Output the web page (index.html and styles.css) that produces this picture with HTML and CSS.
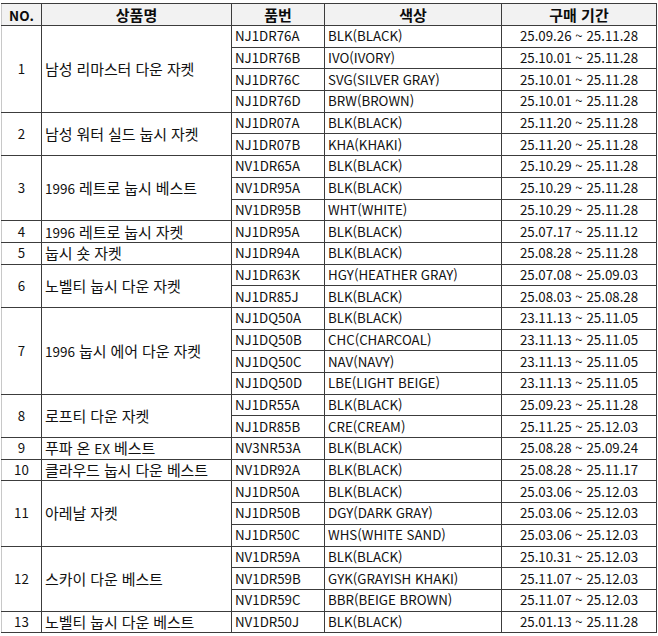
FILE: index.html
```html
<!DOCTYPE html>
<html lang="ko">
<head>
<meta charset="utf-8">
<link rel="stylesheet" href="styles.css">
</head>
<body>
<div class="sheet">
<table class="grid">
<colgroup>
<col class="c-no"><col class="c-name"><col class="c-code"><col class="c-color"><col class="c-period">
</colgroup>
<thead>
<tr class="head"><th class="lat-h">NO.</th><th>상품명</th><th>품번</th><th>색상</th><th>구매 기간</th></tr>
</thead>
<tbody>
<tr><td class="no" rowspan="4">1</td><td class="name" rowspan="4">남성 리마스터 다운 자켓</td><td class="code">NJ1DR76A</td><td class="color">BLK(BLACK)</td><td class="period">25.09.26 ~ 25.11.28</td></tr>
<tr><td class="code">NJ1DR76B</td><td class="color">IVO(IVORY)</td><td class="period">25.10.01 ~ 25.11.28</td></tr>
<tr><td class="code">NJ1DR76C</td><td class="color">SVG(SILVER GRAY)</td><td class="period">25.10.01 ~ 25.11.28</td></tr>
<tr><td class="code">NJ1DR76D</td><td class="color">BRW(BROWN)</td><td class="period">25.10.01 ~ 25.11.28</td></tr>

<tr><td class="no" rowspan="2">2</td><td class="name" rowspan="2">남성 워터 실드 눕시 자켓</td><td class="code">NJ1DR07A</td><td class="color">BLK(BLACK)</td><td class="period">25.11.20 ~ 25.11.28</td></tr>
<tr><td class="code">NJ1DR07B</td><td class="color">KHA(KHAKI)</td><td class="period">25.11.20 ~ 25.11.28</td></tr>

<tr><td class="no" rowspan="3">3</td><td class="name" rowspan="3"><span class="lat">1996</span> 레트로 눕시 베스트</td><td class="code">NV1DR65A</td><td class="color">BLK(BLACK)</td><td class="period">25.10.29 ~ 25.11.28</td></tr>
<tr><td class="code">NV1DR95A</td><td class="color">BLK(BLACK)</td><td class="period">25.10.29 ~ 25.11.28</td></tr>
<tr><td class="code">NV1DR95B</td><td class="color">WHT(WHITE)</td><td class="period">25.10.29 ~ 25.11.28</td></tr>

<tr><td class="no">4</td><td class="name"><span class="lat">1996</span> 레트로 눕시 자켓</td><td class="code">NJ1DR95A</td><td class="color">BLK(BLACK)</td><td class="period">25.07.17 ~ 25.11.12</td></tr>

<tr><td class="no">5</td><td class="name">눕시 숏 자켓</td><td class="code">NJ1DR94A</td><td class="color">BLK(BLACK)</td><td class="period">25.08.28 ~ 25.11.28</td></tr>

<tr><td class="no" rowspan="2">6</td><td class="name" rowspan="2">노벨티 눕시 다운 자켓</td><td class="code">NJ1DR63K</td><td class="color">HGY(HEATHER GRAY)</td><td class="period">25.07.08 ~ 25.09.03</td></tr>
<tr><td class="code">NJ1DR85J</td><td class="color">BLK(BLACK)</td><td class="period">25.08.03 ~ 25.08.28</td></tr>

<tr><td class="no" rowspan="4">7</td><td class="name" rowspan="4"><span class="lat">1996</span> 눕시 에어 다운 자켓</td><td class="code">NJ1DQ50A</td><td class="color">BLK(BLACK)</td><td class="period">23.11.13 ~ 25.11.05</td></tr>
<tr><td class="code">NJ1DQ50B</td><td class="color">CHC(CHARCOAL)</td><td class="period">23.11.13 ~ 25.11.05</td></tr>
<tr><td class="code">NJ1DQ50C</td><td class="color">NAV(NAVY)</td><td class="period">23.11.13 ~ 25.11.05</td></tr>
<tr><td class="code">NJ1DQ50D</td><td class="color">LBE(LIGHT BEIGE)</td><td class="period">23.11.13 ~ 25.11.05</td></tr>

<tr><td class="no" rowspan="2">8</td><td class="name" rowspan="2">로프티 다운 자켓</td><td class="code">NJ1DR55A</td><td class="color">BLK(BLACK)</td><td class="period">25.09.23 ~ 25.11.28</td></tr>
<tr><td class="code">NJ1DR85B</td><td class="color">CRE(CREAM)</td><td class="period">25.11.25 ~ 25.12.03</td></tr>

<tr><td class="no">9</td><td class="name">푸파 온 <span class="lat">EX</span> 베스트</td><td class="code">NV3NR53A</td><td class="color">BLK(BLACK)</td><td class="period">25.08.28 ~ 25.09.24</td></tr>

<tr><td class="no">10</td><td class="name">클라우드 눕시 다운 베스트</td><td class="code">NV1DR92A</td><td class="color">BLK(BLACK)</td><td class="period">25.08.28 ~ 25.11.17</td></tr>

<tr><td class="no" rowspan="3">11</td><td class="name" rowspan="3">아레날 자켓</td><td class="code">NJ1DR50A</td><td class="color">BLK(BLACK)</td><td class="period">25.03.06 ~ 25.12.03</td></tr>
<tr><td class="code">NJ1DR50B</td><td class="color">DGY(DARK GRAY)</td><td class="period">25.03.06 ~ 25.12.03</td></tr>
<tr><td class="code">NJ1DR50C</td><td class="color">WHS(WHITE SAND)</td><td class="period">25.03.06 ~ 25.12.03</td></tr>

<tr><td class="no" rowspan="3">12</td><td class="name" rowspan="3">스카이 다운 베스트</td><td class="code">NV1DR59A</td><td class="color">BLK(BLACK)</td><td class="period">25.10.31 ~ 25.12.03</td></tr>
<tr><td class="code">NV1DR59B</td><td class="color">GYK(GRAYISH KHAKI)</td><td class="period">25.11.07 ~ 25.12.03</td></tr>
<tr><td class="code">NV1DR59C</td><td class="color">BBR(BEIGE BROWN)</td><td class="period">25.11.07 ~ 25.12.03</td></tr>

<tr><td class="no">13</td><td class="name">노벨티 눕시 다운 베스트</td><td class="code">NV1DR50J</td><td class="color">BLK(BLACK)</td><td class="period">25.01.13 ~ 25.11.28</td></tr>
</tbody>
</table>
</div>
</body>
</html>
```
FILE: styles.css
```css
html, body {
  margin: 0;
  padding: 0;
  background: #ffffff;
}
.sheet {
  padding: 3px 0 0 1px;
  width: 658px;
  height: 636px;
  box-sizing: border-box;
  overflow: hidden;
  font-family: "Noto Sans CJK KR", "Noto Sans", sans-serif;
  font-size: 13.3px;
  color: #111111;
}
.grid {
  border-collapse: collapse;
  table-layout: fixed;
  width: 655px;
}
.c-no { width: 40px; }
.c-name { width: 190px; }
.c-code { width: 93px; }
.c-color { width: 177px; }
.c-period { width: 155px; }
.grid th, .grid td {
  border: 1px solid #3c3c3c;
  padding: 0 3px;
  line-height: 16px;
  white-space: nowrap;
  overflow: hidden;
  vertical-align: middle;
}
.grid tr { height: 21.7px; }
.grid tr.head { height: 22px; }
.grid th {
  background: #f2f2f2;
  font-weight: 700;
  font-size: 15px;
  text-align: center;
  color: #0c0c0c;
}
.grid th.lat-h {
  font-size: 13.5px;
}
.grid th:first-child, .grid td.no {
  border-left-color: #c8c8c8;
}
.no { text-align: center; }
.name {
  text-align: left;
  font-size: 15px;
  letter-spacing: -0.1px;
}
.name .lat {
  font-size: 13.5px;
  letter-spacing: 0;
}
.code { text-align: left; }
.color { text-align: left; }
.period { text-align: center; }
```
